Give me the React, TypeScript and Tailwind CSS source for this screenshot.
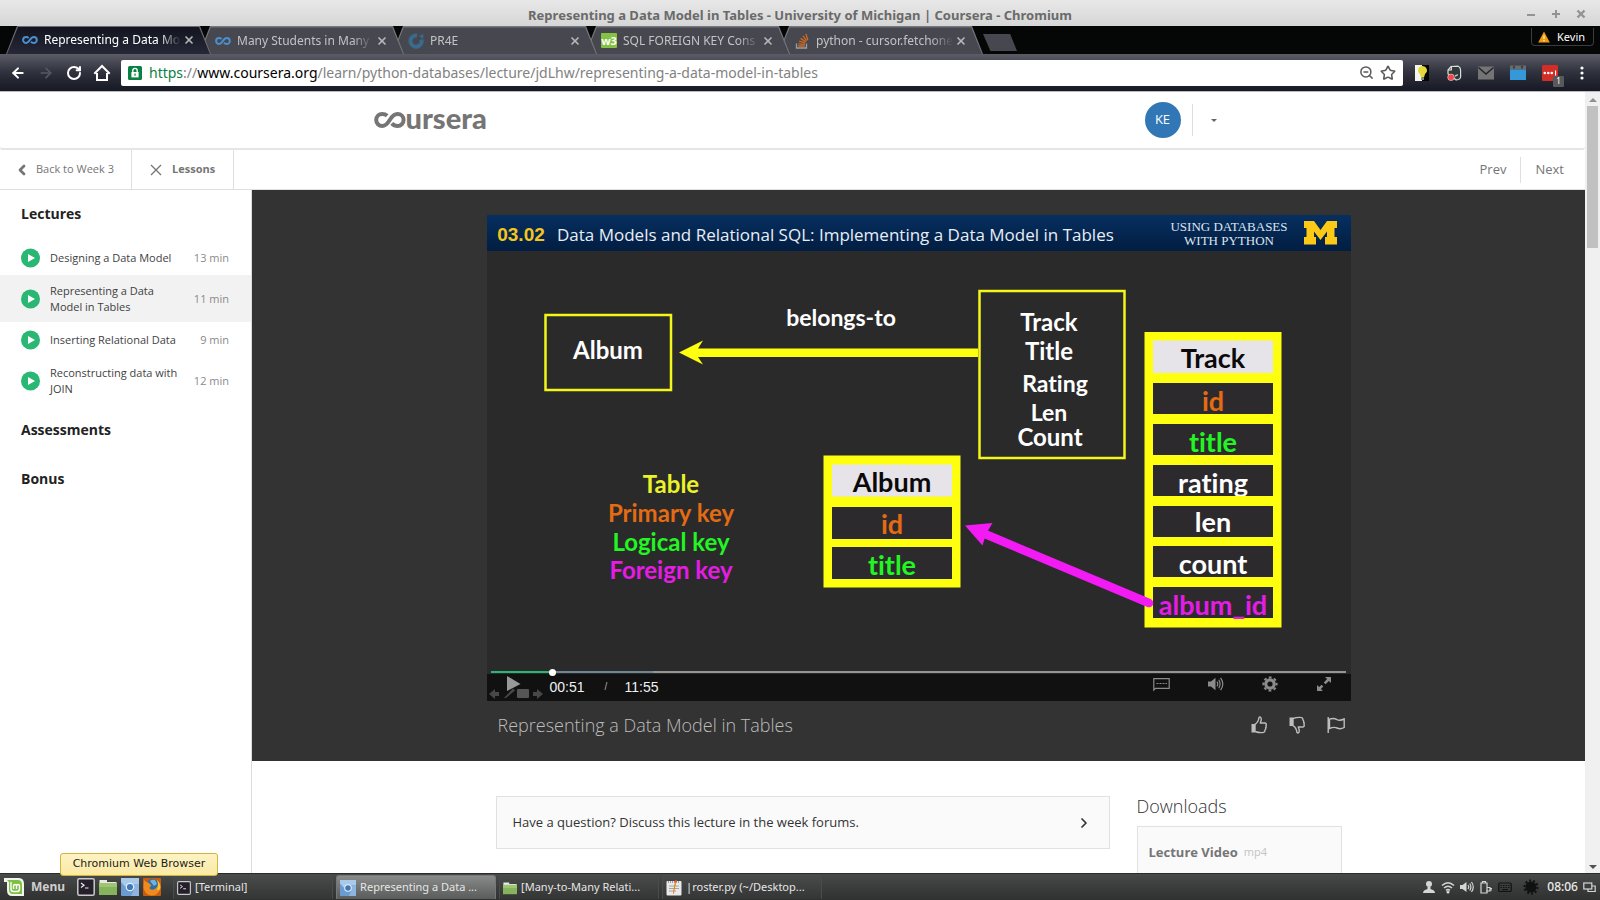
import React from "react";
import { ArrowLeft, ArrowRight, ChevronLeft, ChevronRight, RotateCw, X, ZoomOut, Star } from "lucide-react";

const ui = "font-['Noto_Sans',sans-serif]";

function InfinityMark({ className, color }: { className: string; color: string }) {
  return (
    <svg className={className} viewBox="0 0 32 16" fill="none" stroke={color} strokeWidth="4">
      <path d="M13.2 3.8 C11.8 2.5 10.2 2 8.2 2 A6 6 0 0 0 8.2 14 C16 14 15.200 2 23.600 2 A6 6 0 0 1 23.600 14 C21 14 19.200 13 17.800 11.400" />
    </svg>
  );
}

function Pr4eIcon() {
  return (
    <svg className="h-4 w-4" viewBox="0 0 16 16" fill="none">
      <path d="M9 2.6 A5.6 5.6 0 1 0 13.4 6.5" stroke="#3a6a8e" strokeWidth="4" />
      <path d="M11 3 L15.5 1 L15 6 Z" fill="#3a6a8e" />
    </svg>
  );
}

function W3Icon() {
  return (
    <span className="flex h-[15px] w-4 items-center justify-center rounded-[1px] bg-[#83c341] text-[11px] font-bold leading-none text-white">
      w3
    </span>
  );
}

function StackIcon() {
  return (
    <svg className="h-4 w-4" viewBox="0 0 16 16" fill="none">
      <path d="M2.5 10.5 V15 H12.5 V10.5" stroke="#9b9ea3" strokeWidth="1.3" />
      <path d="M4.3 13 H10.8 M4.5 10.8 L10.9 11.3 M5.1 8.2 L11.2 9.9 M6.6 5.4 L11.9 8.7 M9 2.9 L12.8 7.8 M12 1 L13.8 7" stroke="#d2691e" strokeWidth="1.3" />
    </svg>
  );
}

const tabs = [
  { title: "Representing a Data Mo", icon: <InfinityMark className="h-2 w-4" color="#4a8fd0" />, z: "z-50" },
  { title: "Many Students in Many", icon: <InfinityMark className="h-2 w-4" color="#4a8fd0" />, z: "z-40" },
  { title: "PR4E", icon: <Pr4eIcon />, z: "z-30" },
  { title: "SQL FOREIGN KEY Cons", icon: <W3Icon />, z: "z-20" },
  { title: "python - cursor.fetchone", icon: <StackIcon />, z: "z-10" },
];

const tabShape = "[clip-path:polygon(0_100%,11px_0,calc(100%-11px)_0,100%_100%)]";

function BrowserChrome() {
  return (
    <header className={`shrink-0 ${ui}`}>
      <div className="flex h-[26px] items-center bg-gradient-to-b from-[#e8e8e8] to-[#d6d6d6] text-[#6a6a6a]">
        <div className="w-[100px]" />
        <h1 className="flex-1 pt-1 text-center text-[13px] font-bold leading-5">
          Representing a Data Model in Tables - University of Michigan | Coursera - Chromium
        </h1>
        <div className="flex w-[100px] justify-end gap-[15px] pr-[14px] pt-[2px] text-[#939393]">
          <button aria-label="Minimize">
            <svg className="h-[10px] w-[10px]" viewBox="0 0 10 10"><path d="M1 6H9" stroke="currentColor" strokeWidth="2" /></svg>
          </button>
          <button aria-label="Maximize">
            <svg className="h-[10px] w-[10px]" viewBox="0 0 10 10"><path d="M1 5H9M5 1V9" stroke="currentColor" strokeWidth="2" /></svg>
          </button>
          <button aria-label="Close window">
            <svg className="h-[10px] w-[10px]" viewBox="0 0 10 10"><path d="M1.5 1.5L8.5 8.5M8.5 1.5L1.5 8.5" stroke="currentColor" strokeWidth="2.4" /></svg>
          </button>
        </div>
      </div>

      <div className="flex h-7 bg-[#050606] pl-[6px] pr-[6px]">
        <div className="flex flex-1">
          {tabs.map((tab, i) => (
            <div key={tab.title} className={`relative -mr-3 h-7 w-[205px] pt-px ${tab.z} ${tabShape} ${i === 0 ? "bg-[#6b6b72]" : "bg-[#77787d]"}`}>
              <div className={`flex h-full items-center px-[15px] pb-px ${tabShape} mx-px ${i === 0 ? "bg-gradient-to-b from-[#12141f] to-[#262838] text-white" : "border-t border-[#5d5e65] bg-[#47484f] text-[#c3c3c6]"}`}>
                <span className="flex w-[22px] shrink-0 items-center">{tab.icon}</span>
                <span className="w-[138px] whitespace-nowrap text-[12px] leading-4 [mask-image:linear-gradient(to_right,#000_84%,transparent)]">
                  {tab.title}
                </span>
                <button aria-label={`Close ${tab.title}`} className="ml-[2px] text-[#b5b5b8]">
                  <X className="h-3 w-3" strokeWidth={3.4} />
                </button>
              </div>
            </div>
          ))}
          <button aria-label="New tab" className="ml-3 mt-2 h-[17px] w-[34px] bg-[#47484f] [clip-path:polygon(0_0,80%_0,100%_100%,22%_100%)]" />
        </div>
        <button className="mt-[2px] flex h-[18px] w-[63px] items-center gap-[7px] rounded-b-[4px] border border-t-0 border-[#3c3c3e] pl-[6px] text-[11px] leading-4 text-white">
          <svg className="h-3 w-3" viewBox="0 0 12 12"><path d="M6 .5L11.8 11.5H.2Z" fill="#f19a0d" /><path d="M6 4.5V8M6 9V10.2" stroke="#fff" strokeWidth="1.1" /></svg>
          Kevin
        </button>
      </div>

      <div className="flex h-[38px] items-center border-b border-[#b9bac0] bg-gradient-to-b from-[#5b5c66] via-[#2f313d] to-[#161824] pl-[10px] text-white">
        <button aria-label="Back"><ArrowLeft className="h-[18px] w-4" strokeWidth={3} /></button>
        <button aria-label="Forward" className="ml-3 text-[#575962]"><ArrowRight className="h-[18px] w-4" strokeWidth={2.6} /></button>
        <button aria-label="Reload" className="ml-3"><RotateCw className="h-4 w-4" strokeWidth={3} /></button>
        <button aria-label="Home" className="ml-[11px]">
          <svg className="h-[18px] w-[18px]" viewBox="0 0 18 18" fill="none" stroke="currentColor" strokeWidth="2"><path d="M1.3 9.8L9 2L16.7 9.8M4 9V16H14V9" /></svg>
        </button>
        <div className="ml-[10px] flex h-[26px] flex-1 items-center rounded-[2px] bg-white pl-[7px] pr-[7px] text-[#5a5a5a]">
          <svg className="h-[14px] w-[14px]" viewBox="0 0 14 14"><rect width="14" height="14" rx="1.5" fill="#0b8043" /><rect x="3.4" y="6" width="7.2" height="5.4" fill="#fff" /><path d="M4.8 6V4.6A2.2 2.2 0 0 1 9.2 4.6V6" fill="none" stroke="#fff" strokeWidth="1.3" /><rect x="6.3" y="7.6" width="1.4" height="2" fill="#0b8043" /></svg>
          <div role="textbox" aria-label="Address" className="ml-[7px] flex-1 text-[14px] leading-5 text-[#828282]">
            <span className="text-[#0b8043]">https</span>://<span className="text-black">www.coursera.org</span>/learn/python-databases/lecture/jdLhw/representing-a-data-model-in-tables
          </div>
          <button aria-label="Zoom"><ZoomOut className="h-[15px] w-[15px]" strokeWidth={2.4} /></button>
          <button aria-label="Bookmark" className="ml-[6px]"><Star className="h-4 w-4" strokeWidth={2.4} /></button>
        </div>
        <div className="flex items-center gap-4 pl-[11px] pr-4">
          <svg className="h-4 w-4" viewBox="0 0 16 16"><rect x="1" width="7" height="16" fill="#f5f5f0" /><rect x="8" width="7" height="16" fill="#050505" /><path d="M8 1A4.4 4.4 0 0 1 11 9L10 12.5H7L6 9A4.4 4.4 0 0 1 8 1Z" fill="#e4d93a" /><rect x="7" y="12.5" width="3" height="2.5" fill="#8a8a80" /></svg>
          <svg className="h-4 w-4" viewBox="0 0 16 16"><path d="M5 1.5L12 1.2Q14.6 2 14.6 6V12Q14 15 10 14.8L2 9V5Z" fill="#2f3b3b" stroke="#dcdcdc" strokeWidth="1.2" /><path d="M2 5H5.3V1.6M9.5 11.5Q9.5 9.8 12 10" fill="none" stroke="#e8e8e8" strokeWidth="1.2" /><circle cx="5" cy="12.3" r="3.3" fill="#f0484e" stroke="#f5dada" strokeWidth=".6" /></svg>
          <svg className="h-4 w-4" viewBox="0 0 16 16"><rect y="1.5" width="16" height="13" fill="#747474" /><path d="M.5 2.5L8 9L15.5 2.5" fill="none" stroke="#23252f" strokeWidth="1.5" /></svg>
          <svg className="h-4 w-4" viewBox="0 0 16 16"><rect y=".5" width="16" height="4" fill="#6b6b6b" /><rect y="4.5" width="16" height="10.5" fill="#3498db" /><path d="M4 1V3.4M12 1V3.4" stroke="#2a2b30" strokeWidth="1.4" /></svg>
          <div className="relative h-4 w-4 rounded-[1px] bg-[#d32d27]">
            <svg className="h-4 w-4" viewBox="0 0 16 16" fill="#fff"><circle cx="2.8" cy="8" r="1.3" /><circle cx="6.3" cy="8" r="1.3" /><circle cx="9.8" cy="8" r="1.3" /><rect x="13" y="5.5" width="1.1" height="5" /></svg>
            <span className="absolute left-[11px] top-[11px] flex h-[11px] w-[11px] items-center justify-center rounded-[1px] bg-[#58595b] text-[8px] leading-none text-white">1</span>
          </div>
          <button aria-label="Browser menu" className="ml-[6px]">
            <svg className="h-[14px] w-1" viewBox="0 0 4 14" fill="#fff"><circle cx="2" cy="2" r="1.6" /><circle cx="2" cy="7" r="1.6" /><circle cx="2" cy="12" r="1.6" /></svg>
          </button>
        </div>
      </div>
    </header>
  );
}

function SiteHeader() {
  return (
    <div className="h-[58px] rounded-[3px] border-b-2 border-[#e5e5e5] bg-white">
      <div className="mx-auto flex h-full w-[848px] items-center">
        <a href="#home" aria-label="Coursera" className="ml-[5px] flex items-center text-[#757575]">
          <InfinityMark className="h-4 w-8" color="#757575" />
          <span className="-mt-[5px] font-['Lato',sans-serif] text-[29px] font-black leading-8">ursera</span>
        </a>
        <div className="ml-auto flex items-center">
          <button className="h-9 w-9 rounded-full bg-[#3277b5] text-[13px] text-white">KE</button>
          <span className="ml-[11px] h-8 w-px bg-[#dddddd]" />
          <button aria-label="Account menu" className="ml-[18px]">
            <svg className="h-[3px] w-[6px]" viewBox="0 0 6 3"><path d="M0 0H6L3 3Z" fill="#666" /></svg>
          </button>
        </div>
      </div>
    </div>
  );
}

function LessonNav() {
  return (
    <nav className="flex h-10 items-stretch border-b border-[#dfdfdf] bg-white text-[#757575]">
      <a href="#week3" className="flex w-[132px] items-center border-r border-[#dfdfdf] pl-[14px] text-[11px]">
        <ChevronLeft className="h-4 w-4" strokeWidth={4} />
        <span className="ml-[6px]">Back to Week 3</span>
      </a>
      <button className="flex w-[102px] items-center border-r border-[#dfdfdf] pl-[18px] text-[11px] font-bold">
        <svg className="h-3 w-3" viewBox="0 0 12 12"><path d="M1 1L11 11M11 1L1 11" stroke="currentColor" strokeWidth="1.3" /></svg>
        <span className="ml-[10px]">Lessons</span>
      </button>
      <div className="ml-auto flex items-center pr-[21px] text-[13px]">
        <a href="#prev">Prev</a>
        <span className="mx-[14px] h-[26px] w-px bg-[#dfdfdf]" />
        <a href="#next">Next</a>
      </div>
    </nav>
  );
}

const lectures = [
  { title: "Designing a Data Model", time: "13 min" },
  { title: "Representing a Data Model in Tables", time: "11 min", active: true },
  { title: "Inserting Relational Data", time: "9 min" },
  { title: "Reconstructing data with JOIN", time: "12 min" },
];

function Sidebar() {
  return (
    <aside className="w-[252px] shrink-0 border-r border-[#dcdcdc] bg-white">
      <h2 className="mt-[14px] px-[21px] text-[14px] font-bold leading-5 text-[#222]">Lectures</h2>
      <ul className="mt-4">
        {lectures.map((l) => (
          <li key={l.title}>
            <a href="#lecture" className={`flex items-center pb-[7px] pl-[21px] pr-[22px] pt-2 text-[11px] leading-4 ${l.active ? "bg-[#f2f2f2]" : ""}`}>
              <svg className="h-5 w-[19px] shrink-0" viewBox="0 0 19 20"><circle cx="9.5" cy="10" r="9.5" fill="#2ab673" /><path d="M7 6L14 10L7 14Z" fill="#fff" /></svg>
              <span className="ml-[10px] w-[128px] text-[#3f3f3f]">{l.title}</span>
              <span className="ml-auto text-[#8a8a8a]">{l.time}</span>
            </a>
          </li>
        ))}
      </ul>
      <h2 className="mt-4 px-[21px] text-[14px] font-bold leading-5 text-[#222]">Assessments</h2>
      <h2 className="mt-[29px] px-[21px] text-[14px] font-bold leading-5 text-[#222]">Bonus</h2>
    </aside>
  );
}

const yellow = "#fdff0e";
const orange = "#e36c12";
const green = "#22f522";
const magenta = "#e41ce4";

const trackRows = [
  { y: 168, base: 196, label: "id", fill: orange },
  { y: 209, base: 237, label: "title", fill: green },
  { y: 250, base: 278, label: "rating", fill: "#fff" },
  { y: 291, base: 317, label: "len", fill: "#fff" },
  { y: 331, base: 359, label: "count", fill: "#fff" },
  { y: 372, base: 400, label: "album_id", fill: magenta },
];
const albumRows = [
  { y: 292, base: 319, label: "id", fill: orange },
  { y: 332, base: 360, label: "title", fill: green },
];

function Slide() {
  return (
    <svg className="block w-full [font-variant-ligatures:none]" viewBox="0 0 864 459" fontFamily="Lato, sans-serif" fontWeight="700" fontSize="24" textAnchor="middle">
      <defs>
        <linearGradient id="band" x1="0" y1="0" x2="0" y2="1">
          <stop offset="0" stopColor="#062f60" />
          <stop offset="1" stopColor="#021d41" />
        </linearGradient>
      </defs>
      <rect width="864" height="459" fill="#2b2a2b" />
      <rect width="864" height="36" fill="url(#band)" />
      <text x="34" y="26" fontFamily="Liberation Sans, sans-serif" fontSize="19" fill="#f6c51c">03.02</text>
      <text x="70" y="26" textAnchor="start" fontFamily="Open Sans, sans-serif" fontWeight="400" fontSize="17" fill="#e8eef6">
        Data Models and Relational SQL: Implementing a Data Model in Tables
      </text>
      <g fontFamily="Liberation Serif, serif" fontWeight="400" fontSize="13" fill="#dfe5ee">
        <text x="742" y="16">USING DATABASES</text>
        <text x="742" y="30">WITH PYTHON</text>
      </g>
      <path d="M817 6H827L833.500 15L840 6H850V13H847.500V22H850V29.500H838V22H840V16.500L833.500 25L827 16.500V22H829V29.500H817V22H819.500V13H817Z" fill="#fbc916" />

      <g fill="none" stroke="#f4f61a" strokeWidth="2.500">
        <rect x="58.500" y="100" width="125.500" height="75" />
        <rect x="492.500" y="76" width="145" height="167" />
      </g>
      <path d="M491 133.500V142H211L216 149.500L192 137.500L216 125.500L211 133.500Z" fill={yellow} />
      <g fill="#fff">
        <text x="121" y="144">Album</text>
        <text x="354" y="111" fontSize="23">belongs-to</text>
        <text x="562" y="116" fontSize="24">Track</text>
        <text x="562" y="145" fontSize="24">Title</text>
        <text x="568" y="177" fontSize="23">Rating</text>
        <text x="562" y="206" fontSize="23">Len</text>
        <text x="563" y="231" fontSize="24">Count</text>
      </g>

      <text x="184" y="278" fill="#eaf32a">Table</text>
      <text x="184" y="307" fill={orange}>Primary key</text>
      <text x="184" y="336" fill={green}>Logical key</text>
      <text x="184" y="364" fill={magenta}>Foreign key</text>

      <g fontSize="27">
        <rect x="336.500" y="240.500" width="137" height="132" fill={yellow} />
        <rect x="345" y="249.500" width="120" height="32" fill="#e6e3e9" />
        <text x="405" y="277" fill="#0a0a0a">Album</text>
        {albumRows.map((r) => (
          <g key={r.label}>
            <rect x="345" y={r.y} width="120" height="32" fill="#2d2a2e" />
            <text x="405" y={r.base} fill={r.fill}>{r.label}</text>
          </g>
        ))}
        <rect x="657.500" y="117" width="137" height="295.500" fill={yellow} />
        <rect x="666" y="125.500" width="120" height="32.500" fill="#e6e3e9" />
        <text x="726" y="153" fill="#0a0a0a">Track</text>
        {trackRows.map((r) => (
          <g key={r.label}>
            <rect x="666" y={r.y} width="120" height="31" fill="#2d2a2e" />
            <text x="726" y={r.base} fill={r.fill}>{r.label}</text>
            {r.label === "rating" && <rect x="666" y="281" width="120" height="10" fill={yellow} />}
          </g>
        ))}
      </g>
      <path d="M498 319L662 388" stroke="#f31bf3" strokeWidth="8.500" strokeLinecap="round" />
      <path d="M478 310.500L505.500 308L499 319L495.500 330.500Z" fill="#f31bf3" />
    </svg>
  );
}

function Player() {
  return (
    <div className="relative">
      <Slide />
      <input
        type="range"
        aria-label="Seek"
        min={0}
        max={715}
        defaultValue={49}
        className="absolute left-1 right-[5px] top-[456px] h-[2px] w-[855px] appearance-none bg-[linear-gradient(to_right,#2ab673_7%,#6f8593_7%,#6f8593_19%,#989590_19%)] [&::-webkit-slider-thumb]:h-[7px] [&::-webkit-slider-thumb]:w-[7px] [&::-webkit-slider-thumb]:appearance-none [&::-webkit-slider-thumb]:rounded-full [&::-webkit-slider-thumb]:bg-white"
      />
      <div className="flex h-[27px] items-start bg-[#111] text-[#8b8b8b]">
        <svg className="h-[27px] w-14" viewBox="0 0 56 27">
          <g fill="#484848"><path d="M2 20L8 15V18H12V22H8V25Z" /><path d="M17 24L26 14.500L28 16.500L19 24Z" /><rect x="30" y="15" width="12" height="9" rx="1" fill="#555" /><path d="M56 20L50 15V18H46V22H50V25Z" /></g>
          <path d="M20 2L33.500 10L20 17Z" fill="#999" />
        </svg>
        <div className="ml-[7px] flex items-center pt-1 font-['Liberation_Sans',sans-serif] text-[14px] leading-[18px] text-[#f0f0f0]">
          <span className="w-[55px]">00:51</span>
          <span className="w-5 text-[10px] text-[#aaa]">/</span>
          <span>11:55</span>
        </div>
        <div className="ml-auto flex items-center gap-[38px] pr-[19px] pt-[2px]">
          <button aria-label="Subtitles"><svg className="block h-4 w-[17px]" viewBox="0 0 17 16" fill="none" stroke="currentColor" strokeWidth="1.200"><path d="M.8 14V2.600H16.200V12.400H2.500Z" /><path d="M3.500 7.500H14" strokeDasharray="2 1" /></svg></button>
          <button aria-label="Volume"><svg className="block h-4 w-4" viewBox="0 0 16 16" fill="currentColor"><path d="M0 5.500H3L7.500 1.800V14.200L3 10.500H0Z" /><path d="M9 5.600Q10.500 8 9 10.400M10.800 3.800Q13.300 8 10.800 12.200M12.600 1.800Q17 8 12.600 14.200" fill="none" stroke="currentColor" strokeWidth="1.200" /></svg></button>
          <button aria-label="Settings"><svg className="block h-4 w-4" viewBox="0 0 16 16" fill="none" stroke="currentColor"><circle cx="8" cy="8" r="4.200" strokeWidth="3.200" /><circle cx="8" cy="8" r="6.600" strokeWidth="2" strokeDasharray="2.800 2.380" strokeDashoffset="1.400" /></svg></button>
          <button aria-label="Full screen"><svg className="block h-4 w-4" viewBox="0 0 16 16" fill="currentColor"><path d="M9 1H15V7L12.900 4.900L9.500 8.200L7.800 6.500L11.100 3.100ZM7 15H1V9L3.100 11.100L5.600 8.700L7.300 10.400L4.900 12.900Z" /></svg></button>
        </div>
      </div>
    </div>
  );
}

function ThumbIcon({ down }: { down?: boolean }) {
  return (
    <svg className={`block h-[18px] w-4 ${down ? "-scale-y-100" : ""}`} viewBox="0 0 16 18" fill="none" stroke="currentColor" strokeWidth="1.400" strokeLinejoin="round">
      <path d="M.5 8H4V16.500H.5Z" fill="currentColor" stroke="none" />
      <path d="M4 8.300C6.500 6.800 7.600 4.500 8 1.500C8.300.6 10.300.8 10.300 3.200C10.300 4.800 9.500 6 9.300 7H13.800C15.300 7 15.600 8.600 14.900 9.400C15.500 10.200 15.300 11.300 14.600 11.700C15 12.800 14.600 13.500 13.900 14C14.100 15.600 13.200 16.600 11.500 16.600C8.500 16.800 6.500 16.400 4 15.500Z" />
    </svg>
  );
}

function Lesson() {
  return (
    <main className="min-w-0 flex-1">
      <section className="bg-[#333] pb-3 pt-[25px]">
        <div className="mx-auto w-[864px]">
          <Player />
          <div className="flex h-12 items-center justify-between pl-[11px] pr-[6px] text-[#bdbdbd]">
            <h2 className="text-[18px] font-light leading-6">Representing a Data Model in Tables</h2>
            <div className="flex items-center gap-[22px]">
              <button aria-label="Like"><ThumbIcon /></button>
              <button aria-label="Dislike"><ThumbIcon down /></button>
              <button aria-label="Report a problem">
                <svg className="block h-4 w-[18px]" viewBox="0 0 18 16" fill="none" stroke="currentColor" strokeWidth="1.400"><path d="M1.200 0V16M2.500 2.200C6 .8 8 1.400 10 2.600C12.500 3.800 14.500 3.300 17.200 2V10.500C14.500 12 12.500 12.200 10 11C8 10 6 10 2.500 11.500Z" /></svg>
              </button>
            </div>
          </div>
        </div>
      </section>
      <section className="mx-auto flex w-[864px] items-start gap-[27px] px-[9px] pt-[35px]">
        <a href="#forums" className="flex h-[53px] flex-1 items-center justify-between border border-[#e1e1e1] bg-[#fafafa] pl-4 pr-[17px] text-[13px] text-[#333]">
          Have a question? Discuss this lecture in the week forums.
          <ChevronRight className="h-4 w-4" strokeWidth={2.6} />
        </a>
        <div className="w-[205px]">
          <h2 className="text-[18px] font-light leading-5 text-[#333]">Downloads</h2>
          <a href="#video" className="mt-[10px] flex h-20 items-start border border-[#e1e1e1] bg-[#fafafa] px-[11px] pt-4 text-[13px] font-bold leading-[18px] text-[#757575]">
            Lecture Video <span className="ml-[6px] text-[11px] font-normal text-[#c4c4c4]">mp4</span>
          </a>
        </div>
      </section>
    </main>
  );
}

function TerminalIcon({ className }: { className: string }) {
  return (
    <svg className={className} viewBox="0 0 18 18"><rect x=".8" y=".8" width="16.400" height="16.400" rx="1.500" fill="#241f2b" stroke="#c9c9c9" strokeWidth="1.500" /><path d="M4 5L7 7.200L4 9.400M8 10H11.500" fill="none" stroke="#eee" strokeWidth="1.200" /></svg>
  );
}
function FolderIcon({ className }: { className: string }) {
  return (
    <svg className={className} viewBox="0 0 18 18"><path d="M.5 2H8V4H17.500V7H.5Z" fill="#e9e9e4" /><path d="M0 5H18V17H0Z" fill="#86b45c" /><path d="M0 5H18V9H0Z" fill="#9cc674" /></svg>
  );
}
function ChromiumIcon({ className }: { className: string }) {
  return (
    <svg className={className} viewBox="0 0 18 18"><rect width="18" height="18" rx="1" fill="#6a9bd1" /><path d="M0 0H18V6H9L4 8.500L0 4Z" fill="#a9c9ea" /><path d="M10 18L13 11L12 6H18V18Z" fill="#8db5de" /><circle cx="9" cy="9" r="4.300" fill="#e8f0f8" /><circle cx="9" cy="9" r="3.100" fill="#3f78b5" /></svg>
  );
}
function FirefoxIcon({ className }: { className: string }) {
  return (
    <svg className={className} viewBox="0 0 18 18"><rect width="18" height="18" rx="1" fill="#c65b12" /><circle cx="9.500" cy="7.500" r="6.500" fill="#2d6ea8" /><path d="M7 3Q9 1 12 2L14 6L11 8Z" fill="#6eb4dc" /><path d="M1 2Q3 4 5 4.500Q8 6 8.500 8Q6 8.500 7 11Q11 13 14 9Q16 6 14 2Q19 6 17 12Q14 18 8 17.500Q1 16 .5 9Z" fill="#ef8a1c" /><path d="M14 2Q18 6 17 11Q15 13 14 12Q16 7 14 2Z" fill="#f8c33c" /></svg>
  );
}
function NotesIcon({ className }: { className: string }) {
  return (
    <svg className={className} viewBox="0 0 16 16"><rect x=".5" y="1" width="15" height="14.500" rx="1" fill="#e9e9e9" /><path d="M2 2H14" stroke="#555" strokeDasharray="1 1" /><path d="M3 6H13M3 8.500H13M3 11H10" stroke="#a2a2a2" /><path d="M10.500 1L8 13L7 14.500V12L9 1Z" fill="#e78a1f" /><path d="M9 0H11L10.500 2H8.800Z" fill="#d44" /></svg>
  );
}

const tasks = [
  { label: "[Terminal]", icon: <TerminalIcon className="h-[14px] w-[14px]" /> },
  { label: "Representing a Data ...", icon: <ChromiumIcon className="h-4 w-4" />, active: true },
  { label: "[Many-to-Many Relati...", icon: <FolderIcon className="h-[14px] w-[14px]" /> },
  { label: "|roster.py (~/Desktop...", icon: <NotesIcon className="h-4 w-4" /> },
];

function Taskbar() {
  return (
    <footer className={`relative flex h-[27px] shrink-0 items-center border-t border-[#2b2b2b] bg-gradient-to-b from-[#484a49] to-[#2f3030] pl-1 pr-1 text-[12px] text-[#e6e6e6] ${ui}`}>
      <div role="tooltip" className="absolute left-[60px] top-[-21px] flex h-[23px] w-[158px] items-center justify-center rounded-[3px] border border-[#d4b33b] bg-gradient-to-b from-[#fdf3c3] to-[#faeaa4] font-['DejaVu_Sans',sans-serif] text-[11px] text-[#1c1c1c]">
        Chromium Web Browser
      </div>
      <button className="flex items-center text-[12px] font-bold text-[#d0d0d0]">
        <svg className="h-[18px] w-5" viewBox="0 0 20 18"><path d="M0 0H15Q20 0 20 6V18H8Q3 18 3 12V4H0Z" fill="#f2f5ee" /><path d="M3 2H14Q18 2 18 7V16H9Q5 16 5 12V4Z" fill="#7cc143" /><path d="M7 4V11Q7 13.500 9.500 13.500H13Q15.500 13.500 15.500 11V8Q15.500 6.500 14 6.500T12.500 8V11M12.500 8Q12.500 6.500 11 6.500T9.500 8V11" fill="none" stroke="#fff" strokeWidth="1.400" /></svg>
        <span className="ml-[7px]">Menu</span>
      </button>
      <div className="ml-3 flex items-center gap-1">
        <button aria-label="Terminal"><TerminalIcon className="block h-[18px] w-[18px]" /></button>
        <button aria-label="Files"><FolderIcon className="block h-[18px] w-[18px]" /></button>
        <button aria-label="Chromium"><ChromiumIcon className="block h-[18px] w-[18px]" /></button>
        <button aria-label="Firefox"><FirefoxIcon className="block h-[18px] w-[18px]" /></button>
      </div>
      <div className="ml-3 flex gap-[3px]">
        {tasks.map((t) => (
          <button key={t.label} className={`flex h-6 w-40 items-center gap-1 whitespace-nowrap rounded-t-[3px] border border-b-0 pl-[3px] text-[11px] ${t.active ? "border-[#777] bg-gradient-to-b from-[#898b8a] to-[#5a5c5b]" : "border-[#4a4b4b] bg-gradient-to-b from-[#494a4a] to-[#343535]"}`}>
            {t.icon}
            {t.label}
          </button>
        ))}
      </div>
      <div className="ml-auto flex items-center gap-[5px] text-[#d5d5d5]">
        <svg className="h-[14px] w-[14px]" viewBox="0 0 14 14" fill="currentColor"><circle cx="7" cy="4" r="3" /><path d="M1 13Q1 10 5.500 9V7H8.500V9Q13 10 13 13Z" /></svg>
        <svg className="h-[14px] w-[14px]" viewBox="0 0 14 14" fill="none" stroke="currentColor" strokeWidth="1.500"><path d="M1 5.500Q7 0 13 5.500M3 8Q7 4.500 11 8M5 10.300Q7 8.700 9 10.300" /><circle cx="7" cy="12" r=".8" fill="currentColor" /></svg>
        <svg className="h-[14px] w-[14px]" viewBox="0 0 14 14" fill="currentColor"><path d="M0 5H2.500L6.500 2V12L2.500 9H0Z" /><path d="M8 5Q9.500 7 8 9M9.800 3.500Q12 7 9.800 10.500M11.500 2Q15 7 11.500 12" fill="none" stroke="currentColor" strokeWidth="1.200" /></svg>
        <svg className="h-[14px] w-[14px]" viewBox="0 0 14 14" fill="none" stroke="currentColor" strokeWidth="1.200"><path d="M2 3H8V13H2ZM3.500 3V1.500H6.500V3" /><path d="M8 7.500H11V11H7M11 8.500H13M11 10H13" /></svg>
        <svg className="h-[14px] w-[14px] text-[#111]" viewBox="0 0 14 14" fill="none" stroke="currentColor" strokeWidth="1.200"><rect x=".8" y="3" width="12.400" height="8.500" rx="1" /><path d="M2.500 5.500H11.500M2.500 7.500H11.500" strokeDasharray="1.500 1" /><path d="M4 9.600H10" /></svg>
        <svg className="ml-[6px] h-4 w-4" viewBox="0 0 16 16"><circle cx="8" cy="8" r="5.500" fill="#111" /><circle cx="8" cy="8" r="6.500" fill="none" stroke="#111" strokeWidth="2" strokeDasharray="2 2" /></svg>
        <time className="ml-[3px] text-[12px] font-medium text-[#ececec]">08:06</time>
        <svg className="h-[13px] w-[13px]" viewBox="0 0 13 13" fill="none" stroke="currentColor" strokeWidth="1.200"><rect x=".8" y="2" width="8" height="6" /><path d="M9 5H12.200V10.500H5V8" /></svg>
      </div>
    </footer>
  );
}

export default function App() {
  return (
    <div className="flex h-screen flex-col overflow-hidden bg-white font-['Open_Sans',sans-serif]">
      <BrowserChrome />
      <div className="flex min-h-0 flex-1 overflow-hidden">
        <div className="flex min-w-0 flex-1 flex-col">
          <SiteHeader />
          <LessonNav />
          <div className="flex min-h-0 flex-1">
            <Sidebar />
            <Lesson />
          </div>
        </div>
        <div className="flex w-[15px] flex-col items-center bg-[#f0f0f0] pb-1 pt-[6px]">
          <svg className="h-1 w-2" viewBox="0 0 8 4"><path d="M0 4L4 0L8 4Z" fill="#8f8f8f" /></svg>
          <div className="mt-1 h-[142px] w-[11px] bg-[#c1c1c1]" />
          <svg className="mt-auto h-1 w-2" viewBox="0 0 8 4"><path d="M0 0L4 4L8 0Z" fill="#505050" /></svg>
        </div>
      </div>
      <Taskbar />
    </div>
  );
}
